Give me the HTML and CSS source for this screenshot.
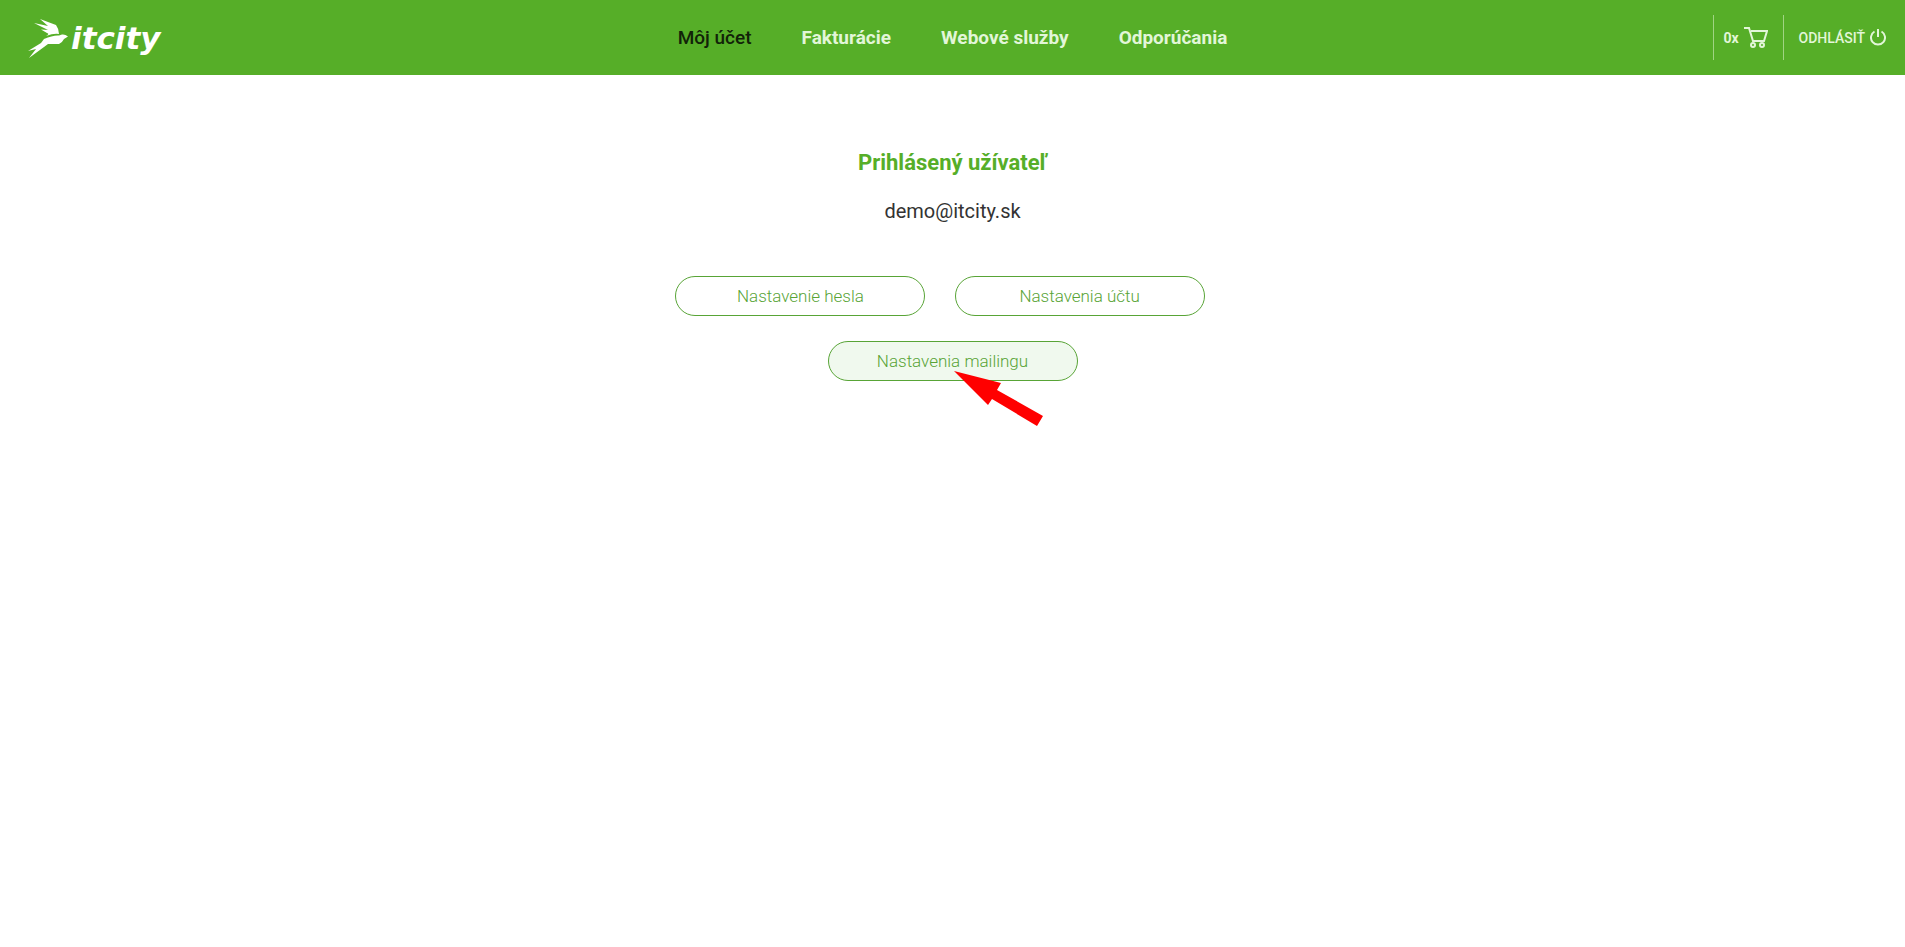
FILE: index.html
```html
<!DOCTYPE html>
<html lang="sk">
<head>
  <meta charset="UTF-8">
  <meta name="viewport" content="width=device-width, initial-scale=1.0">
  <title>itcity - Môj účet</title>
  <link rel="stylesheet" href="styles.css">
</head>
<body>
  <header class="header">
    <a class="logo" href="#">
      <svg class="logo-bird" width="40" height="40" viewBox="0 0 40 40" aria-hidden="true">
        <path fill="#fff" d="M12 1L28 7Q31 11 31 16Q26 15 18 18Q22 16 19 15L13 11.500L20 12L6 5L20 8Z"/>
        <path fill="#fff" d="M16 21Q25 17 31 17.500L34 16.500Q37 16 40 18.500L36 21Q34 25 31 26L20 26L16 29L1 40L8 31L0 33L13 25Z"/>
      </svg>
      <span class="logo-text">itcity</span>
    </a>

    <nav class="nav">
      <a class="nav-link active" href="#">Môj účet</a>
      <a class="nav-link" href="#">Fakturácie</a>
      <a class="nav-link" href="#">Webové služby</a>
      <a class="nav-link" href="#">Odporúčania</a>
    </nav>

    <div class="tools">
      <a class="cart" href="#">
        0x
        <svg width="24" height="21" viewBox="0 0 24 21" fill="none" stroke="#e2f6d8" stroke-width="2" aria-hidden="true">
          <path d="M0 1H5L9 14H20L23 4H7"/>
          <circle cx="9" cy="18" r="2"/>
          <circle cx="18" cy="18" r="2"/>
        </svg>
      </a>
      <a class="logout" href="#">
        ODHLÁSIŤ
        <svg width="16" height="17" viewBox="0 0 16 17" fill="none" stroke="#e2f6d8" stroke-width="2" aria-hidden="true">
          <path d="M4.500 2.500A7 7 0 1 0 11.500 2.500M8 0V8"/>
        </svg>
      </a>
    </div>
  </header>

  <main class="content">
    <h1 class="title">Prihlásený užívateľ</h1>
    <p class="user">demo@itcity.sk</p>
    <div class="buttons">
      <button class="btn spaced" type="button">Nastavenie hesla</button>
      <button class="btn spaced" type="button">Nastavenia účtu</button>
      <div class="pointed">
        <button class="btn hover" type="button">Nastavenia mailingu</button>
        <svg class="arrow" width="90" height="56" viewBox="0 0 90 56" aria-hidden="true">
          <path fill="#f00" d="M0 0L47 12L43 19L89 45L83 55L38 28L34 34Z"/>
        </svg>
      </div>
    </div>
  </main>
</body>
</html>
```
FILE: styles.css
```css
body {
  min-height: 100vh;
  margin: 0;
  background: #fff;
  color: #333;
  font-family: Roboto, sans-serif;
}

a {
  text-decoration: none;
}

.header {
  display: grid;
  grid-template-columns: 1fr auto 1fr;
  align-items: center;
  min-height: 75px;
  padding: 0 19px;
  box-sizing: border-box;
  background: #56ae28;
}

.logo {
  display: flex;
  align-items: center;
  gap: 3px;
  padding-left: 9px;
  color: #fff;
}

.logo-text {
  font: italic bold 31px/40px "DejaVu Sans", sans-serif;
}

.nav {
  display: flex;
  gap: 50px;
}

.nav-link {
  color: #e2f6d8;
  font-size: 19px;
  font-weight: 700;
  line-height: 24px;
}

.nav-link.active {
  color: #112308;
  font-weight: 500;
}

.tools {
  display: flex;
  justify-content: flex-end;
}

.cart,
.logout {
  display: flex;
  align-items: center;
  height: 45px;
  border-left: 1px solid #a0d483;
  color: #e2f6d8;
  font-size: 14px;
  font-weight: 500;
}

.cart {
  gap: 5px;
  padding: 0 15px 0 9px;
  font-weight: 700;
}

.logout {
  gap: 5px;
  padding-left: 15px;
}

.content {
  padding-top: 73px;
  text-align: center;
}

.title {
  margin: 0;
  color: #56ae28;
  font-size: 22px;
  font-weight: 700;
  line-height: 30px;
}

.user {
  margin: 18px 0 50px;
  font-size: 20px;
  line-height: 30px;
}

.buttons {
  font-size: 17px;
}

.btn {
  width: 250px;
  height: 40px;
  border: 1px solid #58a436;
  border-radius: 20px;
  background: #fff;
  color: #58a436;
  font-family: inherit;
  font-size: 17px;
  font-weight: 300;
  cursor: pointer;
}

.btn.spaced {
  margin: 0 25px 25px 0;
}

.btn:hover,
.btn.hover {
  background: #f0f9ee;
}

.pointed {
  position: relative;
  width: 250px;
  margin: 0 auto;
}

/* pointer over the mailing button */
.arrow {
  position: absolute;
  top: 30px;
  left: 126px;
}
```
